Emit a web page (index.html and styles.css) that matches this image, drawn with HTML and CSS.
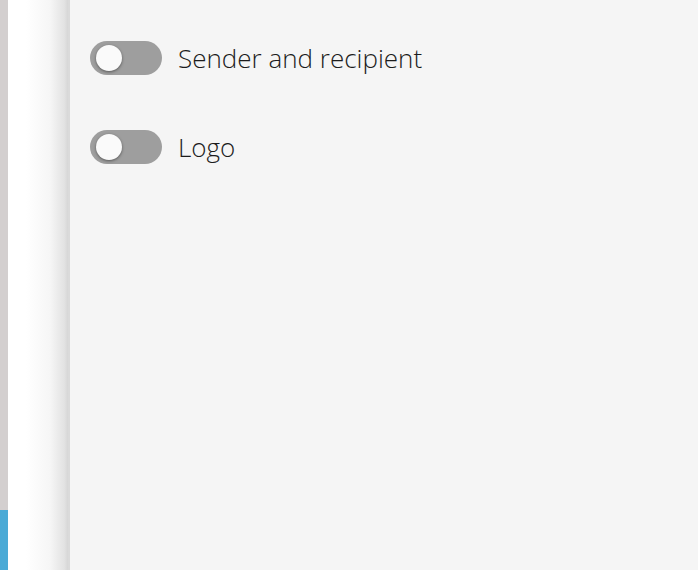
FILE: index.html
```html
<!DOCTYPE html>
<html lang="en">
<head>
    <meta charset="UTF-8">
    <meta name="viewport" content="width=device-width, initial-scale=1.0">
    <title>Document options</title>
    <link rel="stylesheet" href="styles.css">
</head>
<body>
    <div class="layout">
        <div class="rail">
            <div class="rail-active"></div>
        </div>
        <div class="backdrop"></div>
        <div class="panel">
            <label class="option">
                <input type="checkbox" class="switch-input">
                <span class="switch"></span>
                <span class="option-label">Sender and recipient</span>
            </label>
            <label class="option">
                <input type="checkbox" class="switch-input">
                <span class="switch"></span>
                <span class="option-label">Logo</span>
            </label>
        </div>
    </div>
</body>
</html>
```

FILE: styles.css
```css
html, body {
    margin: 0;
    height: 100%;
}

body {
    font-family: "Open Sans", "Liberation Sans", sans-serif;
    background-color: #fff;
    overflow: hidden;
}

.layout {
    display: flex;
    height: 100%;
}

.rail {
    width: 8px;
    display: flex;
    flex-direction: column;
    justify-content: flex-end;
    background-color: #d3cfcf;
}

.rail-active {
    height: 60px;
    background-color: #4aaad6;
}

/* white strip the panel's shadow falls on */
.backdrop {
    width: 60px;
    background: linear-gradient(to right, #fff 0%, #fff 30%, #f6f6f6 70%, #e2e2e2 94%, #d6d6d6 100%);
}

.panel {
    flex: 1;
    background-color: #f5f5f5;
    padding: 41px 20px 0;
    display: flex;
    flex-direction: column;
    gap: 55px;
    border-left: 2px solid #dadada;
}

.option {
    display: flex;
    align-items: center;
    gap: 16px;
    cursor: pointer;
}

.switch-input {
    display: none;
}

.switch {
    position: relative;
    width: 72px;
    height: 34px;
    border-radius: 17px;
    background-color: #9e9e9e;
    flex-shrink: 0;
    transition: background-color 0.2s ease;
}

.switch::after {
    content: "";
    position: absolute;
    left: 6px;
    top: 4px;
    width: 26px;
    height: 26px;
    border-radius: 50%;
    background-color: #fafafa;
    box-shadow: 0 1px 3px rgba(0, 0, 0, 0.45);
    transition: left 0.2s ease;
}

.switch-input:checked + .switch {
    background-color: #4aaad6;
}

.switch-input:checked + .switch::after {
    left: 40px;
}

.option-label {
    font-size: 26px;
    font-weight: 300;
    color: #1c1c1c;
    line-height: 34px;
}
```
